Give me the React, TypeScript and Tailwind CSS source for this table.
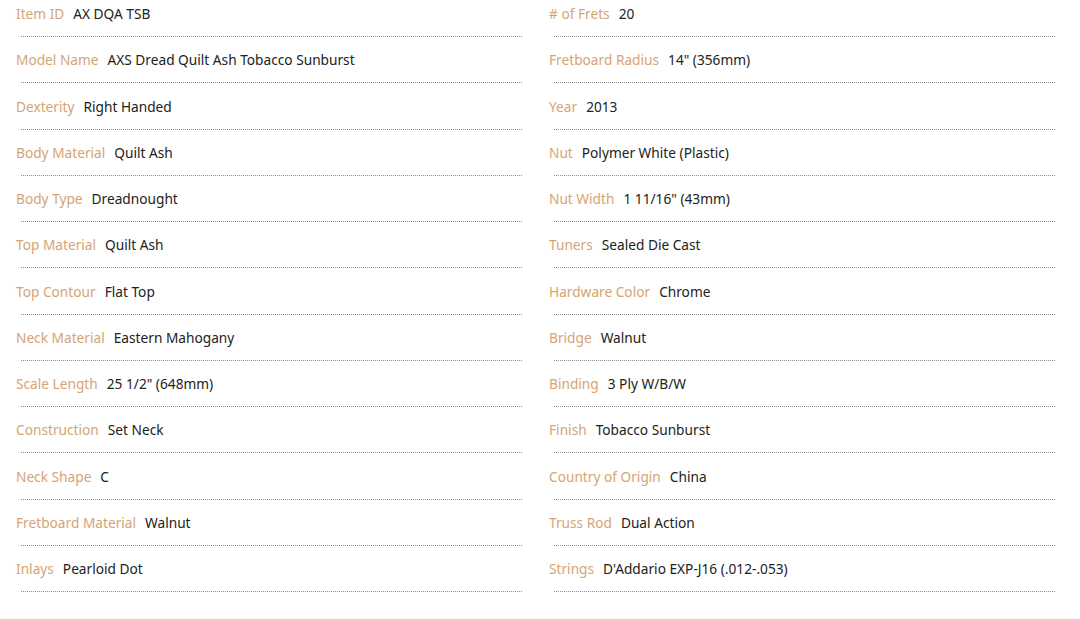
const left: [string, string][] = [
  ["Item ID", "AX DQA TSB"],
  ["Model Name", "AXS Dread Quilt Ash Tobacco Sunburst"],
  ["Dexterity", "Right Handed"],
  ["Body Material", "Quilt Ash"],
  ["Body Type", "Dreadnought"],
  ["Top Material", "Quilt Ash"],
  ["Top Contour", "Flat Top"],
  ["Neck Material", "Eastern Mahogany"],
  ["Scale Length", "25 1/2\" (648mm)"],
  ["Construction", "Set Neck"],
  ["Neck Shape", "C"],
  ["Fretboard Material", "Walnut"],
  ["Inlays", "Pearloid Dot"],
];

const right: [string, string][] = [
  ["# of Frets", "20"],
  ["Fretboard Radius", "14\" (356mm)"],
  ["Year", "2013"],
  ["Nut", "Polymer White (Plastic)"],
  ["Nut Width", "1 11/16\" (43mm)"],
  ["Tuners", "Sealed Die Cast"],
  ["Hardware Color", "Chrome"],
  ["Bridge", "Walnut"],
  ["Binding", "3 Ply W/B/W"],
  ["Finish", "Tobacco Sunburst"],
  ["Country of Origin", "China"],
  ["Truss Rod", "Dual Action"],
  ["Strings", "D'Addario EXP-J16 (.012-.053)"],
];

function SpecColumn({ rows }: { rows: [string, string][] }) {
  return (
    <div className="w-[506px]">
      {rows.map(([label, value]) => (
        <div key={label} className="mb-[13.25px]">
          <div className="flex gap-[9px] leading-5 text-[13.7px]">
            <span className="text-[#d6a474]">{label}</span>
            <span className="text-[#222222]">{value}</span>
          </div>
          <div className="ml-[5px] mt-[12px] border-t border-dotted border-[#8a8a8a]"></div>
        </div>
      ))}
    </div>
  );
}

export default function App() {
  return (
    <div
      className="bg-white w-[1080px] h-[619px] pt-[4px] pl-[16px] flex gap-[27px]"
      style={{ fontFamily: '"Noto Sans", "Open Sans", sans-serif' }}
    >
      <SpecColumn rows={left} />
      <SpecColumn rows={right} />
    </div>
  );
}
